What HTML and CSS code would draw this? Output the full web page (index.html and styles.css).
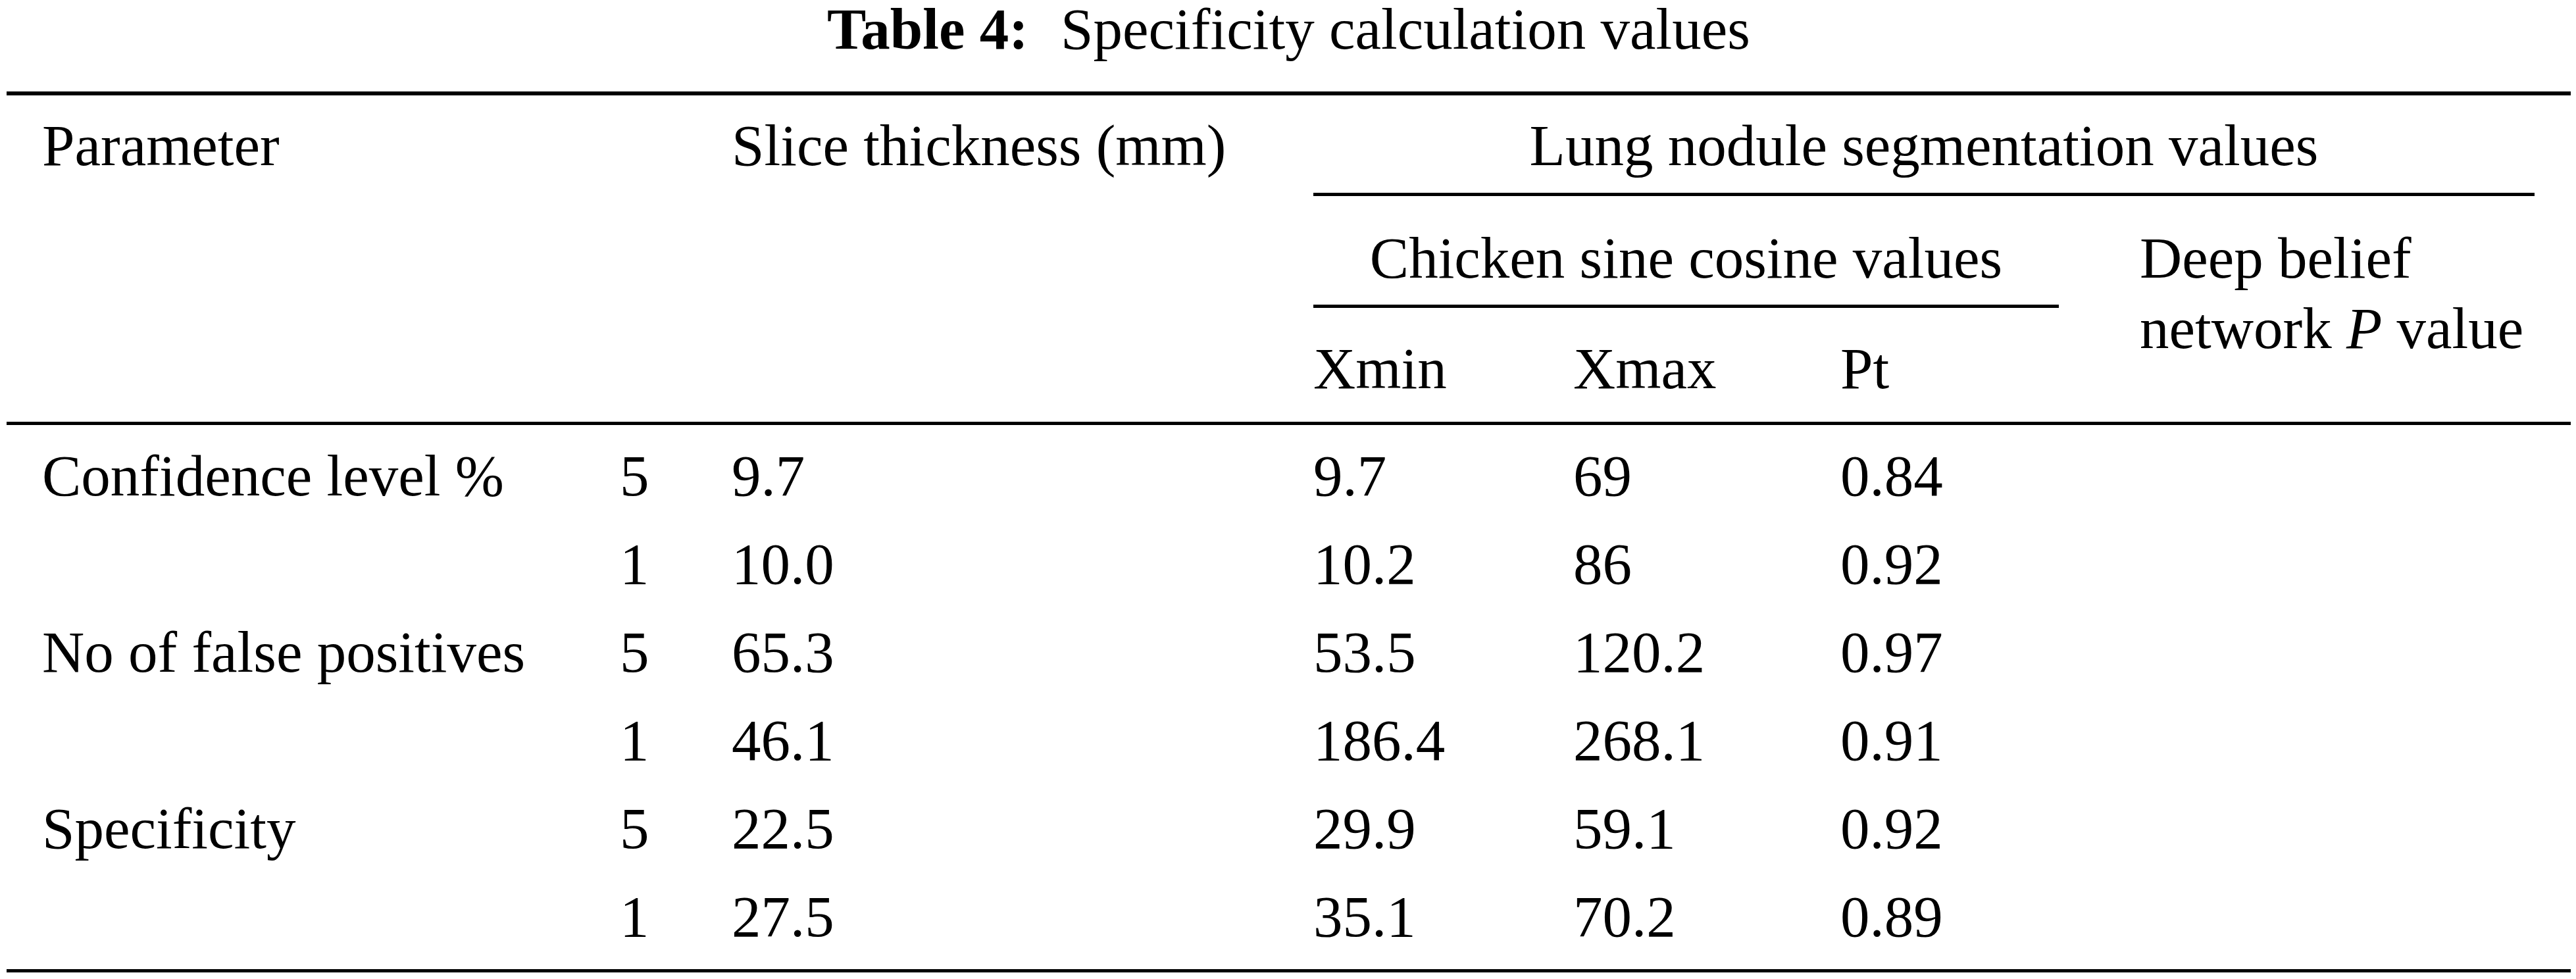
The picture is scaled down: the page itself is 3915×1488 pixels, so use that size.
FILE: index.html
```html
<!DOCTYPE html>
<html lang="en">
<head>
<meta charset="utf-8">
<title>Table 4: Specificity calculation values</title>
<link rel="stylesheet" href="styles.css">
</head>
<body>
<div class="page">
  <div class="caption"><span class="label">Table 4:</span> Specificity calculation values</div>
  <div class="table">
    <div class="grid thead">
      <div class="h-param">Parameter</div>
      <div class="h-slice">Slice thickness (mm)</div>
      <div class="h-lung">Lung nodule segmentation values</div>
      <div class="h-chicken">Chicken sine cosine values</div>
      <div class="h-deep">Deep belief network <i>P</i> value</div>
      <div class="h-sub c4">Xmin</div>
      <div class="h-sub c5">Xmax</div>
      <div class="h-sub c6">Pt</div>
    </div>
    <div class="grid tbody">
      <div>Confidence level %</div><div>5</div><div>9.7</div><div>9.7</div><div>69</div><div>0.84</div><div></div>
      <div></div><div>1</div><div>10.0</div><div>10.2</div><div>86</div><div>0.92</div><div></div>
      <div>No of false positives</div><div>5</div><div>65.3</div><div>53.5</div><div>120.2</div><div>0.97</div><div></div>
      <div></div><div>1</div><div>46.1</div><div>186.4</div><div>268.1</div><div>0.91</div><div></div>
      <div>Specificity</div><div>5</div><div>22.5</div><div>29.9</div><div>59.1</div><div>0.92</div><div></div>
      <div></div><div>1</div><div>27.5</div><div>35.1</div><div>70.2</div><div>0.89</div><div></div>
    </div>
  </div>
</div>
</body>
</html>
```

FILE: styles.css
```css
html, body {
  margin: 0;
  padding: 0;
  background: #ffffff;
}

.page {
  font-family: "Liberation Serif", "Times New Roman", serif;
  font-size: 89px;
  color: #000000;
  width: 3915px;
}

.caption {
  line-height: 89px;
  height: 89px;
  margin-bottom: 50px;
  text-align: center;
  padding-left: 10px;
  width: 3897px;
  white-space: nowrap;
}

.caption .label {
  font-weight: bold;
  margin-right: 27px;
}

.table {
  margin-left: 10px;
  width: 3897px;
  box-sizing: border-box;
  border-top: 6px solid #000000;
  border-bottom: 5px solid #000000;
}

.grid {
  display: grid;
  grid-template-columns: 878px 170px 884px 395px 406px 455px 600px;
  padding: 0 54px;
  white-space: nowrap;
}

.thead {
  line-height: 107px;
  padding-top: 22.5px;
  padding-bottom: 26.5px;
  border-bottom: 5px solid #000000;
  align-items: start;
}

.h-param {
  grid-column: 1;
  grid-row: 1;
}

.h-slice {
  grid-column: 3;
  grid-row: 1;
}

.h-lung {
  grid-column: 4 / 8;
  grid-row: 1;
  text-align: center;
  padding-bottom: 18.5px;
  border-bottom: 5px solid #000000;
}

.h-chicken {
  grid-column: 4 / 7;
  grid-row: 2;
  margin-right: 123px;
  text-align: center;
  padding-top: 40.5px;
  padding-bottom: 17px;
  border-bottom: 5px solid #000000;
}

.h-deep {
  grid-column: 7;
  grid-row: 2 / 4;
  padding-top: 40.5px;
  white-space: normal;
}

.h-deep i {
  font-style: italic;
}

.h-sub {
  grid-row: 3;
  padding-top: 39.5px;
}

.c4 { grid-column: 4; }
.c5 { grid-column: 5; }
.c6 { grid-column: 6; }

.tbody {
  line-height: 134px;
  padding-top: 10px;
  padding-bottom: 13px;
}
```
